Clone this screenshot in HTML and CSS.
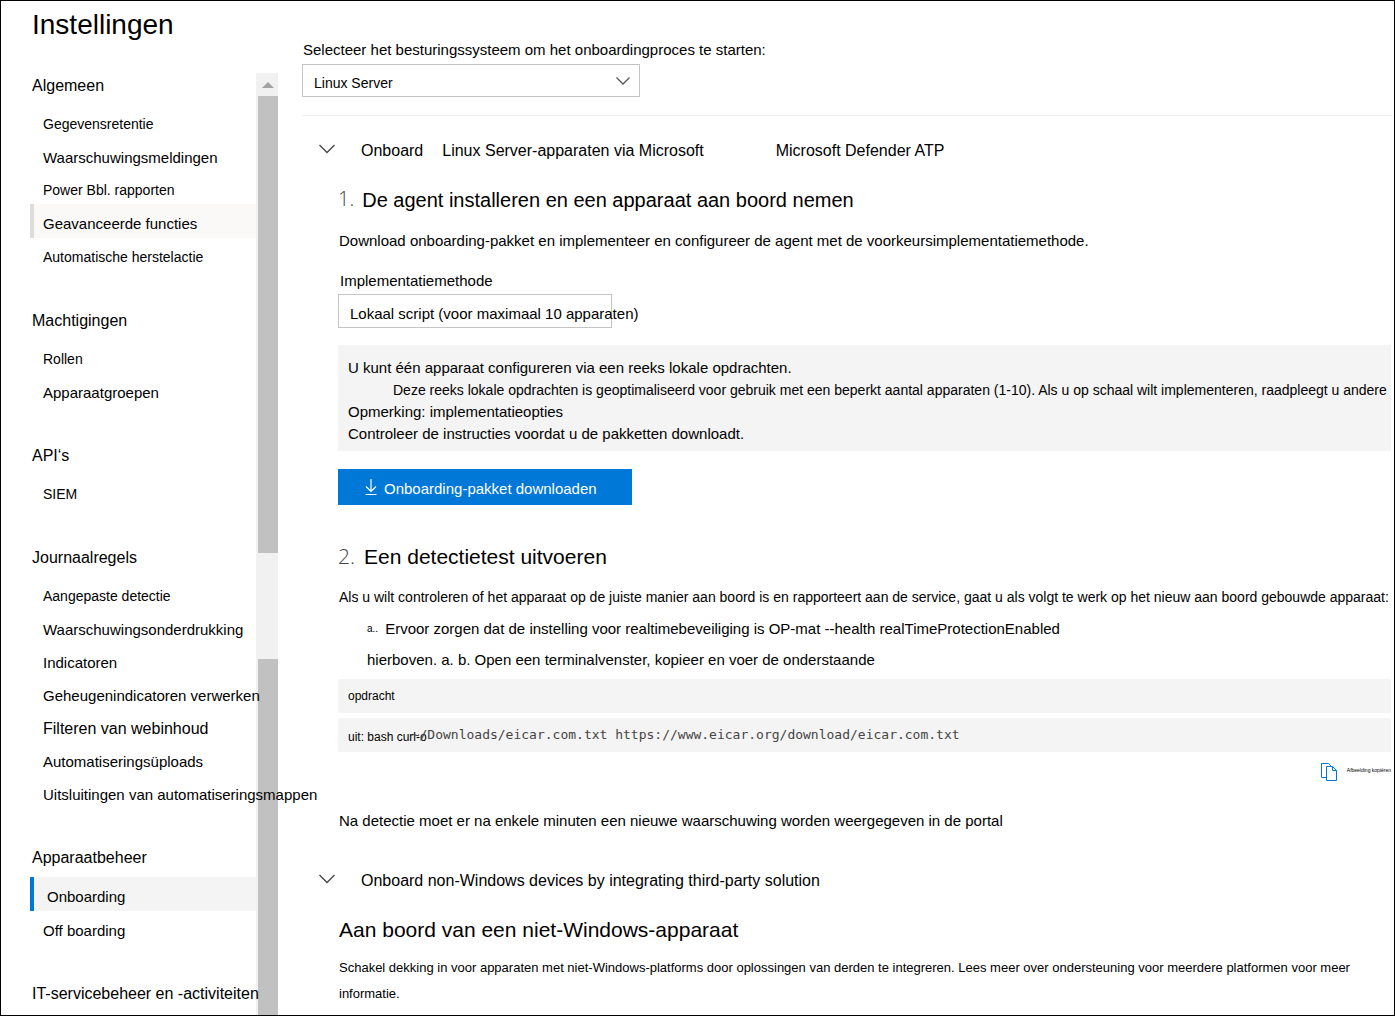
FILE: index.html
```html
<!DOCTYPE html>
<html lang="nl">
<head>
<meta charset="utf-8">
<meta name="viewport" content="width=device-width, initial-scale=1">
<title>Instellingen</title>
<link rel="stylesheet" href="styles.css">
</head>
<body>
<div class="page">
  <aside class="sidebar">
    <h1 class="title">Instellingen</h1>
    <div class="sidebar-body">
      <nav class="nav" aria-label="Instellingen">
        <section class="group">
          <h2 class="group-title">Algemeen</h2>
          <ul class="group-list">
            <li><a class="item small" href="#">Gegevensretentie</a></li>
            <li><a class="item" href="#">Waarschuwingsmeldingen</a></li>
            <li><a class="item small" href="#">Power Bbl. rapporten</a></li>
            <li><a class="item hovered" href="#">Geavanceerde functies</a></li>
            <li><a class="item small" href="#">Automatische herstelactie</a></li>
          </ul>
        </section>
        <section class="group">
          <h2 class="group-title">Machtigingen</h2>
          <ul class="group-list">
            <li><a class="item small" href="#">Rollen</a></li>
            <li><a class="item" href="#">Apparaatgroepen</a></li>
          </ul>
        </section>
        <section class="group">
          <h2 class="group-title">API‘s</h2>
          <ul class="group-list">
            <li><a class="item small" href="#">SIEM</a></li>
          </ul>
        </section>
        <section class="group">
          <h2 class="group-title">Journaalregels</h2>
          <ul class="group-list">
            <li><a class="item small" href="#">Aangepaste detectie</a></li>
            <li><a class="item" href="#">Waarschuwingsonderdrukking</a></li>
            <li><a class="item" href="#">Indicatoren</a></li>
            <li><a class="item" href="#">Geheugenindicatoren verwerken</a></li>
            <li><a class="item large" href="#">Filteren van webinhoud</a></li>
            <li><a class="item" href="#">Automatiseringsüploads</a></li>
            <li><a class="item" href="#">Uitsluitingen van automatiseringsmappen</a></li>
          </ul>
        </section>
        <section class="group">
          <h2 class="group-title">Apparaatbeheer</h2>
          <ul class="group-list">
            <li><a class="item current" href="#" aria-current="page">Onboarding</a></li>
            <li><a class="item" href="#">Off boarding</a></li>
          </ul>
        </section>
        <section class="group">
          <h2 class="group-title">IT-servicebeheer en -activiteiten</h2>
        </section>
      </nav>
      <div class="scrollbar" aria-hidden="true">
        <div class="scroll-up"><svg width="12" height="6" viewBox="0 0 12 6"><path d="M6 0l6 6H0z" fill="#a3a3a3"/></svg></div>
        <div class="thumb"></div>
        <div class="track"></div>
        <div class="thumb lower"></div>
      </div>
    </div>
  </aside>

  <main class="main">
    <label class="label" for="os">Selecteer het besturingssysteem om het onboardingproces te starten:</label>
    <div class="picker">
      <select class="select" id="os"><option>Linux Server</option></select>
      <svg class="picker-icon" width="16" height="10" viewBox="0 0 16 10"><path d="M1.500 1.500L8 8l6.500-6.500" fill="none" stroke="#555" stroke-width="1.300"/></svg>
    </div>
    <hr class="divider">

    <button class="fold" type="button">
      <svg class="chevron" width="16" height="10" viewBox="0 0 16 10"><path d="M.5 1L8 8.500 15.500 1" fill="none" stroke="#444" stroke-width="1.300"/></svg>
      <span class="fold-text"><span>Onboard</span><span class="fold-os">Linux Server-apparaten via Microsoft</span><span>Microsoft Defender ATP</span></span>
    </button>

    <section class="step">
      <h2 class="heading long"><span class="number">1.</span>De agent installeren en een apparaat aan boord nemen</h2>
      <p class="text intro">Download onboarding-pakket en implementeer en configureer de agent met de voorkeursimplementatiemethode.</p>
      <label class="label method-label" for="method">Implementatiemethode</label>
      <div class="method">
        <select class="select method-select" id="method"><option>Lokaal script (voor maximaal 10 apparaten)</option></select>
      </div>
      <div class="note">
        <p>U kunt één apparaat configureren via een reeks lokale opdrachten.</p>
        <p class="note-detail">Deze reeks lokale opdrachten is geoptimaliseerd voor gebruik met een beperkt aantal apparaten (1-10). Als u op schaal wilt implementeren, raadpleegt u andere</p>
        <p>Opmerking: implementatieopties</p>
        <p>Controleer de instructies voordat u de pakketten downloadt.</p>
      </div>
      <button class="download" type="button">
        <svg width="14" height="18" viewBox="0 0 14 18"><path d="M7 1v12M2 8.500l5 5 5-5M1.500 16.500h11" fill="none" stroke="#fff" stroke-width="1.200"/></svg>
        <span class="download-text">Onboarding-pakket downloaden</span>
      </button>
    </section>

    <section class="step second">
      <h2 class="heading"><span class="number">2.</span>Een detectietest uitvoeren</h2>
      <p class="text check">Als u wilt controleren of het apparaat op de juiste manier aan boord is en rapporteert aan de service, gaat u als volgt te werk op het nieuw aan boord gebouwde apparaat:</p>
      <div class="substeps">
        <p class="substep"><span class="mark">a..</span>Ervoor zorgen dat de instelling voor realtimebeveiliging is OP-mat --health realTimeProtectionEnabled</p>
        <p>hierboven. a. b. Open een terminalvenster, kopieer en voer de onderstaande</p>
      </div>
      <div class="command">opdracht</div>
      <div class="command"><span class="shell">uit: bash curl-o</span><code class="code">~/Downloads/eicar.com.txt https://www.eicar.org/download/eicar.com.txt</code></div>
      <button class="copy" type="button">
        <svg width="16" height="18" viewBox="0 0 16 18"><g fill="none" stroke="#0078d7"><path d="M5 14.500H.5V.5h7l3 3"/><path d="M5.500 3.500h6l4 4v10h-10z"/><path d="M11.500 3.500v4h4"/></g></svg>
        <span class="copy-text">Afbeelding kopiëren</span>
      </button>
      <p class="text after">Na detectie moet er na enkele minuten een nieuwe waarschuwing worden weergegeven in de portal</p>
    </section>

    <button class="fold third-party" type="button">
      <svg class="chevron" width="16" height="10" viewBox="0 0 16 10"><path d="M.5 1L8 8.500 15.500 1" fill="none" stroke="#444" stroke-width="1.300"/></svg>
      <span class="fold-text">Onboard non-Windows devices by integrating third-party solution</span>
    </button>
    <section class="step">
      <h2 class="heading plain">Aan boord van een niet-Windows-apparaat</h2>
      <p class="closing">Schakel dekking in voor apparaten met niet-Windows-platforms door oplossingen van derden te integreren. Lees meer over ondersteuning voor meerdere platformen voor meer informatie.</p>
    </section>
  </main>
</div>
</body>
</html>
```
FILE: styles.css
```css
* { box-sizing: border-box; }
body, h1, h2, p, ul { margin: 0; padding: 0; }
body {
  font: 15px/20px "Liberation Sans", Arial, sans-serif;
  color: #000;
  background: #fff;
}
h1, h2 { font-weight: 400; }
svg { flex: none; display: block; }
button, select { font: inherit; color: inherit; }
button { border: 0; background: none; padding: 0; cursor: pointer; text-align: left; }

.page {
  display: flex;
  min-height: 100vh;
  border: 1px solid #000;
}

/* Sidebar */
.sidebar {
  flex: none;
  width: 277px;
  display: flex;
  flex-direction: column;
}
.title {
  padding: 8px 0 0 31px;
  font-size: 28px;
  line-height: 32px;
}
.sidebar-body { flex: 1; display: flex; margin-top: 32px; }
.nav {
  position: relative;
  z-index: 1;
  flex: none;
  width: 255px;
  padding: 3px 0 0 29px;
  white-space: nowrap;
}
.group { margin-bottom: 40px; }
.group:last-child { margin-bottom: 0; }
.group-title {
  padding-left: 2px;
  margin-bottom: 9px;
  font-size: 16px;
  line-height: 20px;
}
.group-list { list-style: none; }
.item {
  display: block;
  height: 33px;
  padding: 6px 0 0 9px;
  border-left: 4px solid transparent;
  line-height: 27px;
  color: inherit;
  text-decoration: none;
}
.small { font-size: 14px; }
.large { font-size: 16px; }
.hovered, .current { height: 34px; }
.hovered { background: #faf9f8; border-color: #dcdcdc; }
.current { background: #f4f4f4; border-color: #0078d7; padding-left: 13px; }

.scrollbar {
  flex: 1;
  display: flex;
  flex-direction: column;
  background: #f1f1f1;
  padding-left: 2px;
}
.scroll-up { height: 23px; display: grid; place-items: center; }
.thumb { flex: 457; background: #c1c1c1; }
.track { flex: 106; }
.lower { flex: 356; }

/* Main column */
.main { flex: 1; min-width: 0; padding: 39px 3px 8px 24px; }
.label { display: block; padding-left: 1px; }
.picker {
  display: grid;
  width: 338px;
  max-width: 100%;
  margin-top: 4px;
}
.picker > * { grid-area: 1 / 1; }
.picker-icon { justify-self: end; align-self: center; margin-right: 9px; pointer-events: none; }
.select {
  appearance: none;
  height: 33px;
  padding: 4px 11px 0;
  border: 1px solid #c4c4c4;
  border-radius: 0;
  background: #fff;
  font-size: 14px;
}
.divider { margin: 18px -2px 0 0; border: 0; border-top: 1px solid #eee; }

.fold {
  display: flex;
  align-items: center;
  gap: 26px;
  margin-top: 25px;
  padding-left: 17px;
  font-size: 16px;
}
.chevron { margin-bottom: 4px; }
.fold-text { display: flex; }
.fold-os { margin: 0 72px 0 19px; }
.third-party { margin-top: 40px; }

.step { padding-left: 36px; }
.heading {
  display: flex;
  gap: 9px;
  margin-top: 25px;
  font-size: 21px;
  line-height: 28px;
}
.long { font-size: 20px; gap: 8px; }
.plain { padding-left: 1px; }
.number { color: #444; font-family: "Open Sans", sans-serif; font-weight: 300; line-height: 26px; }
.text { padding-left: 1px; }
.intro { margin-top: 17px; }
.method-label { margin-top: 20px; padding-left: 2px; }
.method {
  width: 274px;
  height: 34px;
  margin-top: 3px;
  border: 1px solid #c4c4c4;
}
.method-select { width: 310px; border: 0; background: none; font-size: 15px; }
.note {
  margin-top: 17px;
  padding: 12px 10px 6px;
  background: #f4f4f4;
  line-height: 22px;
}
.note-detail { padding-left: 45px; font-size: 14px; white-space: nowrap; }
.download {
  display: flex;
  align-items: center;
  gap: 6px;
  width: 294px;
  height: 36px;
  margin-top: 18px;
  padding-left: 26px;
  background: #0078d7;
  color: #fff;
}
.download-text { padding-top: 3px; }
.second .heading { margin-top: 38px; }
.check { margin-top: 16px; font-size: 14px; white-space: nowrap; }
.substeps {
  display: grid;
  gap: 11px;
  margin: 12px 0 9px;
  padding-left: 29px;
}
.substep { display: flex; gap: 7px; }
.mark { font-size: 10px; }
.command {
  display: flex;
  align-items: center;
  height: 34px;
  margin-bottom: 5px;
  padding: 0 10px;
  border-radius: 2px;
  background: #f4f4f4;
  font-size: 12px;
}
.shell { padding-top: 4px; }
.code {
  margin-left: -15px;
  color: #444;
  font: 13px/20px "DejaVu Sans Mono", monospace;
}
.copy {
  display: flex;
  align-items: center;
  gap: 10px;
  height: 20px;
  margin: 10px 0 0 auto;
}
.copy-text { padding-bottom: 5px; font-size: 5px; }
.after { margin-top: 29px; }
.closing {
  margin-top: 11px;
  padding: 0 40px 0 1px;
  font-size: 13px;
  line-height: 26px;
}
```
